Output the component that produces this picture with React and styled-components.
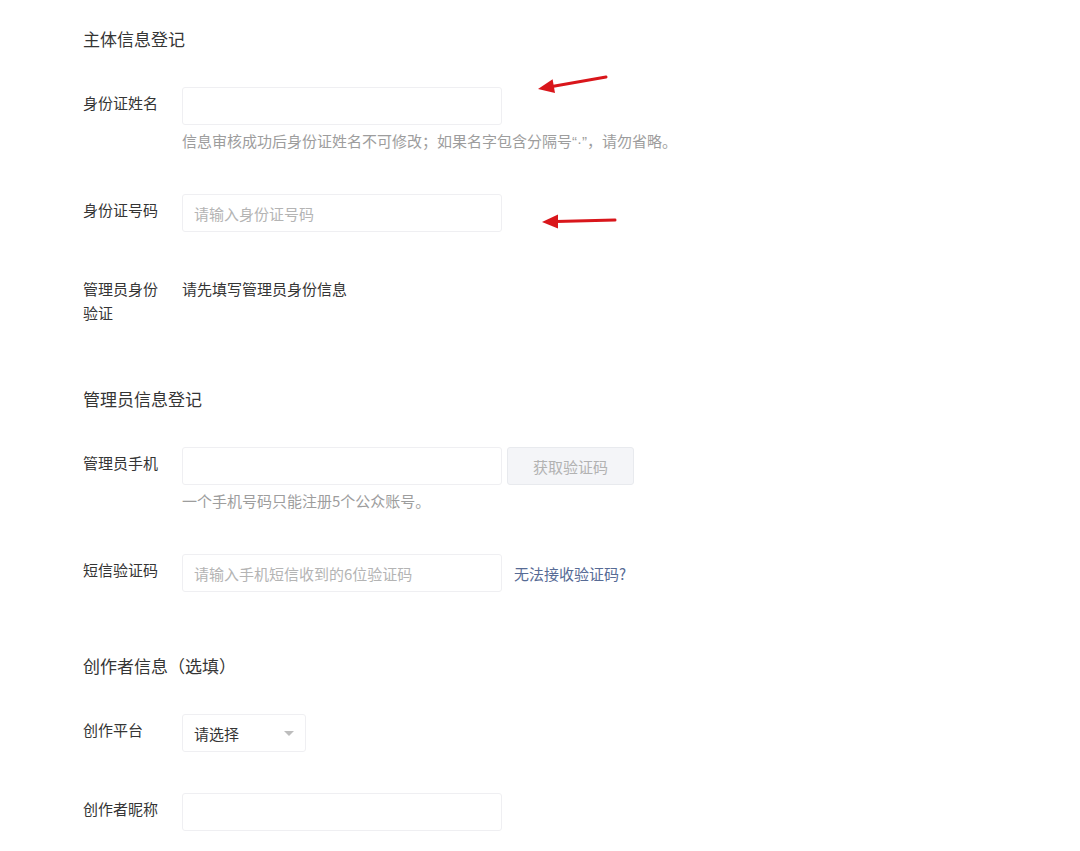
import styled, { createGlobalStyle } from 'styled-components'

const GlobalStyle = createGlobalStyle`
  body {
    margin: 0;
    background: #fff;
    font-family: "Noto Sans CJK SC", "Noto Sans", "Liberation Sans", sans-serif;
    color: #353535;
  }
`

const Page = styled.main`
  padding: 27px 0 0 83px;
`

const Section = styled.section`
  margin-bottom: 62px;
  &:last-child {
    margin-bottom: 0;
  }
`

const Title = styled.h3`
  margin: 0 0 36px;
  font-size: 17px;
  font-weight: 400;
  line-height: 24px;
  color: #353535;
`

const Rows = styled.div`
  display: flex;
  flex-direction: column;
  gap: ${props => props.gap || 42}px;
`

const Row = styled.div`
  position: relative;
  display: flex;
  align-items: flex-start;
`

const Label = styled.label`
  width: 76px;
  margin-right: 23px;
  flex-shrink: 0;
  padding-top: 4px;
  font-size: 15px;
  line-height: 24px;
  color: #353535;
`

const Field = styled.div`
  display: flex;
  flex-direction: column;
`

const Line = styled.div`
  display: flex;
  align-items: center;
`

const Input = styled.input`
  box-sizing: border-box;
  width: ${props => props.width || 320}px;
  height: 38px;
  padding: 0 11px;
  border: 1px solid #efeff2;
  border-radius: 3px;
  background: #fff;
  font: inherit;
  font-size: 15px;
  color: #353535;
  outline: none;
  &::placeholder {
    color: #b4b4b4;
  }
`

const Hint = styled.p`
  margin: 5px 0 0;
  font-size: 15px;
  line-height: 22px;
  color: #9d9d9d;
`

const Quote = styled.span`
  font-family: "Liberation Sans", sans-serif;
`

const Value = styled.p`
  margin: 0;
  padding-top: 5px;
  font-size: 15px;
  line-height: 22px;
  color: #353535;
`

const CodeButton = styled.button`
  box-sizing: border-box;
  width: 127px;
  height: 38px;
  margin-left: 5px;
  border: 1px solid #e8eaee;
  border-radius: 3px;
  background: #f4f5f8;
  font: inherit;
  font-size: 15px;
  color: #b2b2b2;
`

const Link = styled.a`
  margin-left: 12px;
  font-size: 15px;
  color: #576b95;
  text-decoration: none;
`

const Select = styled.div`
  box-sizing: border-box;
  width: 124px;
  height: 38px;
  padding: 0 11px;
  display: flex;
  align-items: center;
  justify-content: space-between;
  border: 1px solid #efeff2;
  border-radius: 3px;
  font-size: 15px;
  color: #353535;
  &:after {
    content: "";
    border-left: 5px solid transparent;
    border-right: 5px solid transparent;
    border-top: 5px solid #bdbdbd;
  }
`

const Arrow = styled.svg`
  position: absolute;
  left: ${props => props.left}px;
  top: ${props => props.top}px;
  overflow: visible;
`

function RedArrow({ left, top, variant }) {
  if (variant === 'tilt') {
    return (
      <Arrow left={left} top={top} width="74" height="22" viewBox="0 0 74 22">
        <line x1="70" y1="3" x2="16" y2="12.5" stroke="#d9161b" strokeWidth="3" strokeLinecap="round" />
        <polygon points="2,15 16.6,5.3 19,19.1" fill="#d9161b" />
      </Arrow>
    )
  }
  return (
    <Arrow left={left} top={top} width="78" height="18" viewBox="0 0 78 18">
      <line x1="75" y1="7" x2="16" y2="8.5" stroke="#d9161b" strokeWidth="3" strokeLinecap="round" />
      <polygon points="2,9 18,1.6 18,15.6" fill="#d9161b" />
    </Arrow>
  )
}

export default function App() {
  return (
    <Page>
      <GlobalStyle />

      <Section>
        <Title>主体信息登记</Title>
        <Rows gap={41}>
          <Row>
            <Label>身份证姓名</Label>
            <Field>
              <Input />
              <Hint>
                信息审核成功后身份证姓名不可修改；如果名字包含分隔号<Quote>“·”</Quote>，请勿省略。
              </Hint>
            </Field>
            <RedArrow left={453} top={-13} variant="tilt" />
          </Row>
          <Row>
            <Label>身份证号码</Label>
            <Field>
              <Input placeholder="请输入身份证号码" />
            </Field>
            <RedArrow left={457} top={19} />
          </Row>
          <Row>
            <Label>管理员身份验证</Label>
            <Value>请先填写管理员身份信息</Value>
          </Row>
        </Rows>
      </Section>

      <Section>
        <Title>管理员信息登记</Title>
        <Rows>
          <Row>
            <Label>管理员手机</Label>
            <Field>
              <Line>
                <Input />
                <CodeButton>获取验证码</CodeButton>
              </Line>
              <Hint>一个手机号码只能注册5个公众账号。</Hint>
            </Field>
          </Row>
          <Row>
            <Label>短信验证码</Label>
            <Line>
              <Input placeholder="请输入手机短信收到的6位验证码" />
              <Link href="#">无法接收验证码?</Link>
            </Line>
          </Row>
        </Rows>
      </Section>

      <Section>
        <Title>创作者信息（选填）</Title>
        <Rows gap={41}>
          <Row>
            <Label>创作平台</Label>
            <Select>请选择</Select>
          </Row>
          <Row>
            <Label>创作者昵称</Label>
            <Input />
          </Row>
        </Rows>
      </Section>
    </Page>
  )
}
